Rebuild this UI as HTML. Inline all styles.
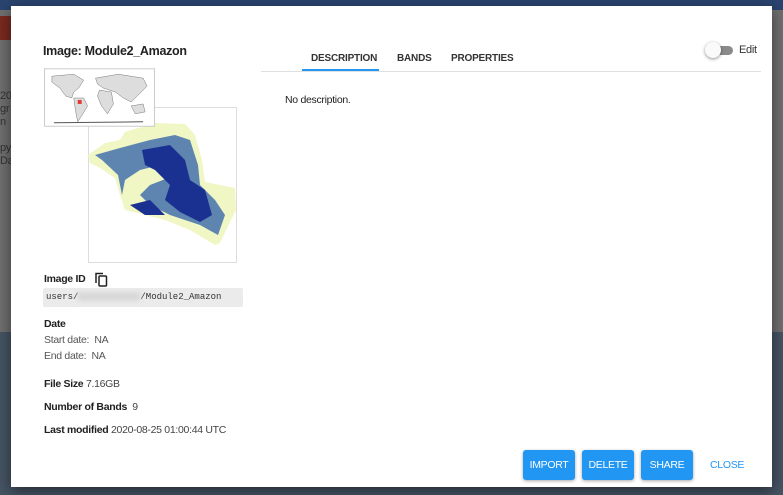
<!DOCTYPE html>
<html><head><meta charset="utf-8"><style>
*{margin:0;padding:0;box-sizing:border-box}
body{width:783px;height:495px;overflow:hidden;position:relative;font-family:"Liberation Sans",sans-serif;background:#465464;letter-spacing:-0.3px}
.bg{position:absolute}
.dlg{position:absolute;left:11px;top:6px;width:761px;height:481px;background:#fff;box-shadow:0 4px 14px rgba(0,0,0,.5)}
.a{position:absolute;white-space:nowrap}
.b{font-weight:bold;font-size:10.5px;color:#212121}
.g{font-size:10.5px;color:#555}
.btn{position:absolute;top:444px;height:30px;background:#2196f3;color:#fff;font-size:10.5px;border-radius:3px;box-shadow:0 1px 3px rgba(0,0,0,.35);display:flex;align-items:center;justify-content:center}
.tab{position:absolute;top:47px;font-size:10px;font-weight:bold;color:#333;letter-spacing:-0.2px}
</style></head><body>
<div class="bg" style="left:0;top:0;width:783px;height:10px;background:#2a4470"></div>
<div class="bg" style="left:0;top:10px;width:783px;height:322px;background:#707070"></div>
<div class="bg" style="left:0;top:16px;width:20px;height:24px;background:#7a2a20"></div>
<div class="bg" style="left:0;top:90px;width:11px;height:90px;color:#333;font-size:11px;line-height:13px">20<br>gr<br>n<br><br>py<br>Da</div>
<div class="dlg">
<div class="a" style="left:32px;top:38px;font-size:12.5px;font-weight:bold;color:#222">Image: Module2_Amazon</div>
<div class="a" style="left:77px;top:101px;width:149px;height:156px;border:1px solid #ddd;background:#fff"></div>
<svg class="a" style="left:77px;top:101px" width="149" height="156" viewBox="88 107 149 156">
<path d="M88 155 L105 143 L120 140 L125 132 L155 123 L185 124 L195 135 L202 160 L205 182 L235 188 L236 210 L230 222 L220 243 L215 245 L190 230 L165 220 L125 210 L120 195 L115 178 L100 168 L90 163Z" fill="#f0f6c4"/>
<path d="M95 155 L120 148 L150 140 L175 135 L190 140 L198 165 L200 185 L215 200 L225 215 L218 235 L200 225 L170 215 L150 205 L140 195 L150 185 L168 178 L160 165 L140 170 L125 180 L122 195 L118 175 L102 160Z" fill="#2c5fa8" opacity=".75"/>
<path d="M142 150 L170 145 L185 160 L190 180 L205 190 L212 215 L200 222 L180 212 L165 200 L170 185 L155 170 L145 165Z" fill="#1a3192"/>
<path d="M130 205 L150 200 L165 215 L145 215Z" fill="#1a3192"/>
</svg>
<svg class="a" style="left:33px;top:62px" width="112" height="60" viewBox="0 0 113 60">
<rect x="0.5" y="0.5" width="111" height="58" fill="#fff" stroke="#ccc"/>
<path d="M8 8 L30 6 L40 12 L35 20 L30 24 L28 30 L22 28 L16 20 L8 14Z" fill="#ddd" stroke="#777" stroke-width=".5"/>
<path d="M30 30 L40 30 L44 38 L38 48 L34 54 L32 44 Z" fill="#ddd" stroke="#777" stroke-width=".5"/>
<path d="M52 10 L75 6 L100 10 L104 18 L96 26 L88 34 L80 30 L72 24 L66 22 L60 20 L54 16Z" fill="#ddd" stroke="#777" stroke-width=".5"/>
<path d="M56 22 L68 24 L70 36 L64 46 L58 38 L54 28Z" fill="#ddd" stroke="#777" stroke-width=".5"/>
<path d="M88 38 L100 36 L102 44 L92 46Z" fill="#ddd" stroke="#777" stroke-width=".5"/>
<path d="M10 55 L100 54" stroke="#555" stroke-width="1"/>
<rect x="34" y="32" width="4" height="4" fill="#e53935"/>
</svg>
<div class="a b" style="left:33px;top:267px">Image ID</div>
<svg class="a" style="left:84px;top:266px" width="13" height="15" viewBox="0 0 13 15"><path d="M1 11 V1.5 H8" fill="none" stroke="#222" stroke-width="1.5"/><rect x="4" y="4" width="7.5" height="10" rx="1" fill="none" stroke="#222" stroke-width="1.5"/></svg>
<div class="a" style="left:32px;top:282px;width:200px;height:19px;background:#ebebeb;border-radius:2px;font-family:'Liberation Mono',monospace;font-size:9px;letter-spacing:0;color:#333;line-height:19px;padding-left:3px">users/<span style="display:inline-block;width:62px;height:9px;background:#d8d8d8;filter:blur(2px);vertical-align:middle"></span>/Module2_Amazon</div>
<div class="a b" style="left:33px;top:312px">Date</div>
<div class="a g" style="left:33px;top:328px">Start date:&nbsp; NA</div>
<div class="a g" style="left:33px;top:344px">End date:&nbsp; NA</div>
<div class="a b" style="left:33px;top:372px">File Size <span style="font-weight:normal;color:#444">7.16GB</span></div>
<div class="a b" style="left:33px;top:395px">Number of Bands <span style="font-weight:normal;color:#444">&nbsp;9</span></div>
<div class="a b" style="left:33px;top:418px">Last modified <span style="font-weight:normal;color:#444">2020-08-25 01:00:44 UTC</span></div>
<div class="tab" style="left:300px">DESCRIPTION</div>
<div class="tab" style="left:386px">BANDS</div>
<div class="tab" style="left:440px">PROPERTIES</div>
<div class="a" style="left:291px;top:63px;width:77px;height:2px;background:#2196f3"></div>
<div class="a" style="left:250px;top:65px;width:500px;height:1px;background:#e0e0e0"></div>
<div class="a" style="left:705px;top:40px;width:17px;height:9px;border-radius:5px;background:#8a8a8a"></div>
<div class="a" style="left:694px;top:36px;width:16px;height:16px;border-radius:50%;background:#fafafa;box-shadow:0 1px 3px rgba(0,0,0,.45)"></div>
<div class="a" style="left:728px;top:38px;font-size:11px;color:#333">Edit</div>
<div class="a" style="left:274px;top:88px;font-size:10.5px;color:#222">No description.</div>
<div class="btn" style="left:512px;width:52px">IMPORT</div>
<div class="btn" style="left:571px;width:52px">DELETE</div>
<div class="btn" style="left:630px;width:52px">SHARE</div>
<div class="a" style="left:699px;top:453px;font-size:10.5px;color:#2196f3">CLOSE</div>
</div>
</body></html>
